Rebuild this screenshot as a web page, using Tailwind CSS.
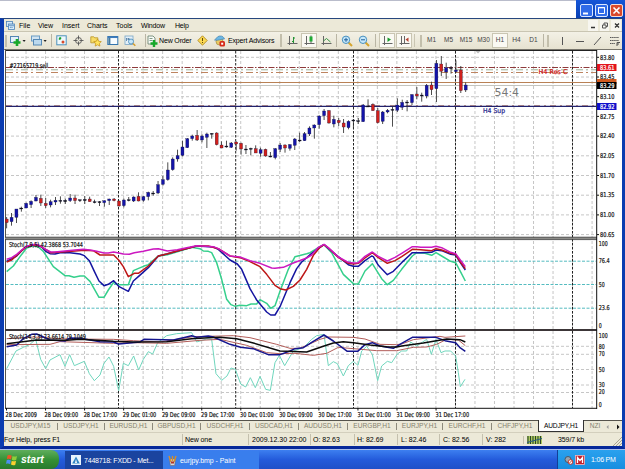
<!DOCTYPE html>
<html lang="en">
  <head>
    <meta charset="UTF-8" />
    <meta name="viewport" content="width=device-width, initial-scale=1.0" />
    <title>AUDJPY,H1</title>
    <script src="https://cdn.jsdelivr.net/npm/@tailwindcss/browser@4"></script>
  </head>
  <body class="w-[625px] h-[469px] overflow-hidden bg-[#ece9d8] text-[7px] leading-none text-black whitespace-nowrap font-['Liberation_Sans',Arial,sans-serif]">
    <div class="flex flex-col h-[449px]">
      <!-- Title bar -->
      <div class="flex h-[18px] shrink-0 justify-between bg-white border-t border-[#b9bccb]">
        <div></div>
        <div class="flex w-[49px] gap-[2px] pl-[4px] pt-[4px] -mt-px bg-linear-to-b from-[#1656d8] to-[#0840b4]">
          <svg class="w-[13px] h-[13px]" viewBox="0 0 13 13"><rect x=".5" y=".5" width="12" height="12" rx="1.5" fill="#2f6be8" stroke="#dce8ff"/><path d="M3 9.500h5" stroke="#fff" stroke-width="2"/></svg>
          <svg class="w-[13px] h-[13px]" viewBox="0 0 13 13"><rect x=".5" y=".5" width="12" height="12" rx="1.500" fill="#2f6be8" stroke="#dce8ff"/><path d="M3.500 3.500h6v6h-6zM3 3.800h7" fill="none" stroke="#fff"/></svg>
          <svg class="w-[13px] h-[13px]" viewBox="0 0 13 13"><rect x=".5" y=".5" width="12" height="12" rx="1.500" fill="#d9492b" stroke="#f6dcd4"/><path d="M3.500 3.500l6 6M9.500 3.500l-6 6" stroke="#fff" stroke-width="1.600"/></svg>
        </div>
      </div>

      <div class="flex-1 flex flex-col min-h-0 border-l-[4px] border-r-[3px] border-b-[3px] border-t border-[#0b3cb0] border-t-[#27477e] border-b-[#06289a]">
        <!-- Menu -->
        <div class="flex items-center h-[12px] shrink-0 pl-[2px]">
          <svg class="w-[9px] h-[9px] mr-[4px]" viewBox="0 0 9 9" fill="#d8ecfa" stroke="#4a82b8" stroke-width=".8"><rect x=".5" y=".5" width="6" height="5"/><rect x="2.500" y="3" width="6" height="5.500"/><path d="M3 4.300h5M4 7l1-1.300 1 1 1-1.200"/></svg>
          <span class="w-[19px]">File</span>
          <span class="w-[24px]">View</span>
          <span class="w-[25px]">Insert</span>
          <span class="w-[29px]">Charts</span>
          <span class="w-[25px]">Tools</span>
          <span class="w-[34px] tracking-[-0.15px]">Window</span>
          <span class="tracking-[-0.2px]">Help</span>
          <svg class="w-[36px] h-[11px] ml-auto" viewBox="0 0 36 11"><path d="M2 0h10v11H2zM14 0h9v11h-9zM25 0h10v11H25z" fill="#f7f6f0"/><path d="M5 7.500h4M29 3.500l4 4M33 3.500l-4 4" stroke="#333" stroke-width="1.300"/><path d="M16.500 5h3.500v3h-3.500zM18 5V3h3.500v3.500H20" fill="none" stroke="#555"/></svg>
        </div>

        <!-- Toolbar -->
        <div class="flex items-center h-[18px] shrink-0 border-t border-[#c9c5b2] bg-linear-to-b from-[#f3f1e6] to-[#e6e2d0] [&>svg]:shrink-0 [&>span]:shrink-0">
          <span class="w-[2px] h-[12px] ml-[1px] bg-[#c3bfac]"></span>
          <svg class="w-[18px] h-[12px] ml-[2px]" viewBox="0 0 18 12"><rect x="1.500" y="1.500" width="8" height="6" fill="#e4f1fa" stroke="#5486b4"/><path d="M8 4v7M4.500 7.500h7" stroke="#18a829" stroke-width="2.600"/><path d="M13.500 5h3.200l-1.600 2z" fill="#222"/></svg>
          <svg class="w-[18px] h-[12px] ml-[3px]" viewBox="0 0 18 12"><rect x="1.500" y="1" width="8" height="5" fill="#d1e4f2" stroke="#6a9bc4"/><rect x="3.500" y="4.500" width="8" height="5.500" fill="#bcd9ee" stroke="#5689b5"/><path d="M13.500 5h3.200l-1.600 2z" fill="#222"/></svg>
          <span class="w-px h-[13px] ml-[3px] bg-[#b9b5a4]"></span>
          <svg class="w-[11px] h-[11px] ml-[4px]" viewBox="0 0 11 11"><rect x=".8" y=".8" width="9.400" height="9" fill="#eef8fc" stroke="#4b91bd"/><path d="M3 4.500l2-2M3 3l2 1" stroke="#18a028" stroke-width="1.600"/><circle cx="7" cy="7" r="1.500" fill="#d84a2a"/></svg>
          <svg class="w-[11px] h-[11px] ml-[6px]" viewBox="0 0 11 11" fill="none" stroke="#555" stroke-width=".9"><circle cx="5.500" cy="5.500" r="3"/><path d="M5.500 .5v4M5.500 6.500v4M.5 5.500h4M6.500 5.500h4"/></svg>
          <svg class="w-[12px] h-[12px] ml-[6px]" viewBox="0 0 12 12"><path d="M.8 1.800h3l1 1h3v5h-7z" fill="#f7dc67" stroke="#b89326" stroke-width=".8"/><path d="M7.500 4l1.200 2.300 2.600.3-1.900 1.800.5 2.700-2.400-1.300-2.300 1.300.4-2.700L3.800 6.600l2.500-.3z" fill="#ffe45d" stroke="#c08c14" stroke-width=".7"/></svg>
          <svg class="w-[12px] h-[11px] ml-[5px]" viewBox="0 0 12 11"><rect x=".8" y="1.500" width="10" height="8" fill="#f8fcff" stroke="#3475ae"/><path d="M1 2.300h10" stroke="#3f7cbd" stroke-width="1.500"/><path d="M2.400 3v6" stroke="#477a9d" stroke-width="2"/></svg>
          <svg class="w-[12px] h-[12px] ml-[5px]" viewBox="0 0 12 12"><rect x="1" y="1" width="8" height="8.500" fill="#e5f0f8" stroke="#79a5c6" stroke-width=".8"/><path d="M2.500 6V3l2 2V3l2 2" fill="none" stroke="#4b78a0" stroke-width=".8"/><circle cx="7" cy="6.500" r="2.500" fill="#c6e6fa" stroke="#4588b7" stroke-width=".8"/><path d="M9 8.500l2.300 2.300" stroke="#d49d2b" stroke-width="1.500"/></svg>
          <span class="w-px h-[13px] ml-[9px] bg-[#b9b5a4]"></span>
          <svg class="w-[11px] h-[12px] ml-[1px]" viewBox="0 0 11 12"><path d="M1 1h5l2 2v6H1z" fill="#f8fbf7" stroke="#5f7c68" stroke-width=".8"/><path d="M2.500 3.500h3M2.500 5.500h3" stroke="#4a7258" stroke-width=".7"/><path d="M7 5v7M3.500 8.500h7" stroke="#18a829" stroke-width="2.400"/></svg>
          <span class="w-[36px] ml-px tracking-[-0.15px]">New Order</span>
          <svg class="w-[11px] h-[11px] ml-[2px]" viewBox="0 0 11 11"><path d="M5.500 .8l4.700 4.700-4.700 4.700L.8 5.500z" fill="#fbd952" stroke="#b08a21" stroke-width=".9"/><path d="M5.500 3v3M5.500 7v1" stroke="#654b09"/></svg>
          <svg class="w-[12px] h-[12px] ml-[6px]" viewBox="0 0 12 12"><circle cx="5.500" cy="6.500" r="3.500" fill="#eacb63" stroke="#947d33" stroke-width=".6"/><path d="M.5 5c2-1 2-3.500 5-4s4.500 1.500 5 3c-4 0-6 2-10 1z" fill="#6cb8e5" stroke="#3a7aa8" stroke-width=".6"/><rect x="5.500" y="6" width="5.500" height="5.500" rx="1.500" fill="#d52b18"/><rect x="7.200" y="7.700" width="2" height="2" fill="#fff"/></svg>
          <span class="w-[52px] ml-[2px] tracking-[-0.15px]">Expert Advisors</span>
          <span class="w-[2px] h-[13px] bg-[#c3bfac]"></span>
          <svg class="w-[11px] h-[11px] ml-[5px]" viewBox="0 0 11 11" fill="none"><path d="M2.500 1v9M.5 8.500h10" stroke="#666"/><path d="M6.500 2v6M5 6.500h1.500M6.500 3H8" stroke="#239234"/></svg>
          <span class="flex items-center justify-center w-[16px] h-[15px] ml-[3px] bg-[#faf9f3] border border-[#c9c5b2]"><svg class="w-[11px] h-[11px]" viewBox="0 0 11 11"><path d="M2.500 1v9M.5 8.500h10M7 .5v8" stroke="#666"/><rect x="5.500" y="1.500" width="3" height="5" fill="#1fab34"/></svg></span>
          <svg class="w-[11px] h-[11px] ml-[4px]" viewBox="0 0 11 11" fill="none"><path d="M2.500 1v9M.5 8.500h10" stroke="#666"/><path d="M2.500 6l3-2.500L9.500 7" stroke="#3a9646"/></svg>
          <span class="w-px h-[13px] ml-[4px] bg-[#b9b5a4]"></span>
          <svg class="w-[12px] h-[12px] ml-[4px]" viewBox="0 0 12 12"><path d="M7.500 7.500l3.500 3.500" stroke="#d5a52d" stroke-width="2"/><circle cx="5" cy="4.800" r="3.700" fill="#c6e8fb" stroke="#4990be"/><path d="M3 4.800h4M5 2.800v4" stroke="#1f609a"/></svg>
          <svg class="w-[12px] h-[12px] ml-[5px]" viewBox="0 0 12 12"><path d="M7.500 7.500l3.500 3.500" stroke="#d5a52d" stroke-width="2"/><circle cx="5" cy="4.800" r="3.700" fill="#c6e8fb" stroke="#4990be"/><path d="M3 4.800h4" stroke="#1f609a"/></svg>
          <span class="w-px h-[13px] ml-[5px] bg-[#b9b5a4]"></span>
          <span class="flex items-center justify-center w-[16px] h-[15px] ml-[3px] bg-[#faf9f3] border border-[#c9c5b2]"><svg class="w-[11px] h-[11px]" viewBox="0 0 11 11"><path d="M2.500 1v9M.5 8.500h10" stroke="#666"/><path d="M5.500 2.500l3.500 2-3.500 2.500z" fill="#169b2a"/></svg></span>
          <span class="flex items-center justify-center w-[16px] h-[15px] ml-px bg-[#faf9f3] border border-[#c9c5b2]"><svg class="w-[11px] h-[11px]" viewBox="0 0 11 11"><path d="M2.500 1v9M.5 8.500h10M5.500 1v7" stroke="#666"/><path d="M9.500 2.500l-3 2 3 2.500z" fill="#b74332"/></svg></span>
          <span class="w-px h-[13px] ml-[2px] bg-[#c9c5b2]"></span>
          <span class="w-[2px] h-[12px] ml-[5px] bg-[#c3bfac]"></span>
          <div class="flex items-center shrink-0 ml-[1px] text-[6.500px] text-[#444] text-center">
            <span class="w-[17px]">M1</span>
            <span class="w-[17px]">M5</span>
            <span class="w-[18px]">M15</span>
            <span class="w-[17px]">M30</span>
            <span class="w-[16px] h-[15px] pt-[3px] bg-[#faf9f3] border border-[#c9c5b2]">H1</span>
            <span class="w-[17px]">H4</span>
            <span class="w-[17px]">D1</span>
          </div>
          <span class="w-px h-[13px] ml-[1px] bg-[#b9b5a4]"></span>
          <span class="w-[2px] h-[12px] ml-[3px] bg-[#c3bfac]"></span>
          <svg class="w-[72px] h-[12px] ml-[2px]" viewBox="0 0 72 12" fill="none" stroke="#555"><path d="M11.500 2v8M25 6.500h8M43 10l7-8"/><path d="M59 2.500h9M59 5.500h9M59 8.500h5" stroke-dasharray="1.500 .6"/><path d="M66 11V7.500h3M66 9h2"/></svg>
        </div>

        <!-- Charts -->
        <svg id="chart" class="block w-full h-[371px] shrink-0 bg-white" viewBox="4 49 618 371">
          <path d="M4 49.500h618" stroke="#77756c"/>
          <path d="M5.500 49v359" stroke="#55534c"/>
          <path d="M6 50.500h591" stroke="#222"/>
          <g id="grid" stroke="#c6c6c6" stroke-dasharray="3 2"></g>
          <path d="M6 261.200h590M6 284.500h590M6 308.200h590" stroke="#55bcc0" stroke-dasharray="3 1.500"/>
          <g id="days" stroke="#222" stroke-dasharray="2.500 1.500"></g>

          <path d="M6 67.500h590" stroke="#8e3a3a" stroke-dasharray="6 1.500 1.500 1.500"/>
          <path d="M6 69.800h590" stroke="#9bb094" stroke-dasharray="7 3 2 3"/>
          <path d="M6 72.500h590" stroke="#bd8460" stroke-dasharray="7 3 2 3"/>
          <path d="M6 82.500h590" stroke="#b98155" stroke-width="1.200"/>
          <path d="M6 85.500h590" stroke="#c4c4be"/>
          <path d="M6 105.500h590" stroke="#b98172" stroke-dasharray="6 4 2 4" stroke-width=".8"/>
          <path d="M6 106.400h590" stroke="#22226c" stroke-width="1.100"/>

          <g id="candles" transform="translate(0 48) scale(.33333)"></g>
          <g transform="translate(0 236) scale(.33333)" fill="none" stroke-width="4.500" stroke-linejoin="round">
            <polyline stroke="#35cf8c" points="20,107 40,90 60,62 80,36 100,29 115,33 130,46 160,92 195,119 207,119 222,124 240,120 253,120 270,136 297,184 312,184 325,162 341,139 356,146 385,146 400,104 430,91 445,86 475,60 502,56 532,47 575,34 600,38 610,45 625,46 635,50 650,80 665,130 680,190 693,206 706,211 720,208 740,209 753,204 770,204 780,191 800,202 812,217 825,209 840,166 865,100 885,62 920,53 930,50 960,32 972,26 995,50 1030,115 1060,143 1075,144 1095,105 1117,83 1145,128 1162,146 1180,133 1205,100 1237,60 1250,50 1275,52 1295,58 1308,50 1325,60 1352,76 1367,80 1381,106 1396,135"/>
            <polyline stroke="#1515a0" points="20,76 50,60 65,44 80,32 95,27 110,27 125,33 137,46 150,53 165,54 180,50 210,50 240,54 253,59 268,74 283,106 297,135 312,149 325,145 341,134 356,151 385,166 400,135 415,122 445,95 475,60 500,54 532,45 590,30 640,33 655,40 690,72 712,84 725,100 750,158 770,192 785,210 800,228 812,237 825,237 840,212 870,140 890,98 905,78 935,52 960,34 972,26 1000,50 1045,86 1060,91 1075,91 1095,74 1115,60 1120,62 1135,88 1162,116 1180,106 1205,80 1237,50 1262,50 1295,49 1308,42 1325,44 1352,55 1367,57 1381,80 1396,102"/>
            <polyline stroke="#bd1717" points="20,78 35,72 50,58 65,44 80,32 95,27 110,27 122,31 137,40 152,50 195,47 225,45 253,43 280,44 300,57 341,57 356,72 370,92 385,122 403,112 415,112 445,90 475,60 500,54 532,45 590,30 625,30 655,38 690,60 720,65 750,77 780,92 800,115 825,148 840,158 857,162 880,151 900,132 920,100 940,58 960,34 972,26 985,36 1015,64 1045,82 1060,84 1075,82 1095,66 1117,50 1135,65 1162,82 1185,74 1205,62 1237,40 1262,41 1295,44 1308,38 1325,42 1352,52 1367,55 1381,78 1396,98"/>
            <polyline stroke="#cc18c0" points="20,70 35,65 50,55 65,42 78,32 95,26 110,25 122,30 137,40 152,48 165,48 195,45 225,42 250,40 270,42 290,46 312,51 325,51 341,48 356,51 370,54 388,55 403,50 430,46 460,39 475,38 490,42 502,45 532,41 560,35 590,29 604,30 640,32 655,38 690,60 720,63 750,74 780,82 815,96 825,97 850,94 880,81 920,66 935,57 955,34 972,25 985,35 1015,63 1045,79 1060,81 1075,80 1095,61 1117,48 1135,61 1162,75 1185,64 1205,52 1237,32 1250,32 1262,34 1295,34 1308,31 1325,35 1352,49 1367,53 1381,72 1396,92"/>

            <polyline stroke="#6fd6bd" stroke-width="3" points="20,398 48,345 70,334 90,325 107,310 122,370 137,398 150,372 180,356 195,391 209,356 223,389 253,376 268,413 283,434 300,417 312,382 327,363 341,391 356,464 370,382 385,389 401,360 416,402 430,370 445,347 458,354 473,320 500,299 530,293 575,290 590,318 620,309 635,310 648,413 665,433 681,420 693,396 706,400 722,444 737,453 751,425 766,455 780,421 797,460 811,463 825,380 838,358 854,389 880,345 910,335 935,310 950,299 972,295 985,389 1000,377 1012,383 1030,420 1045,389 1060,376 1074,388 1085,345 1100,331 1117,355 1133,434 1145,390 1162,376 1175,380 1192,354 1205,345 1220,345 1232,318 1250,330 1280,310 1294,355 1308,310 1323,350 1335,345 1352,345 1367,360 1375,410 1381,452 1395,430"/>
            <polyline stroke="#b25c58" stroke-width="3" points="20,308 100,303 200,309 340,310 400,314 480,318 580,302 625,301 700,299 750,305 830,325 870,337 900,337 960,310 985,303 1060,304 1095,309 1140,325 1190,326 1205,324 1240,311 1320,301 1335,304 1396,300"/>
            <polyline stroke="#b25c58" stroke-width="3" points="20,326 150,325 180,317 340,322 400,320 500,322 600,313 660,310 740,328 800,350 840,353 885,352 940,358 980,352 1015,334 1060,338 1130,344 1190,344 1240,334 1280,333 1310,325 1340,310 1375,312 1396,329"/>
            <polyline stroke="#15158e" points="20,332 50,327 70,308 95,295 110,294 137,306 150,312 195,315 210,306 240,307 270,312 300,317 340,318 356,324 420,318 432,310 520,312 550,305 575,299 590,304 625,300 640,303 690,325 722,334 760,338 805,356 840,356 870,345 885,338 910,335 940,316 972,297 1000,315 1042,346 1073,346 1095,326 1117,320 1140,330 1180,337 1205,322 1237,304 1308,304 1335,314 1367,320 1381,336 1396,346"/>
            <polyline stroke="#0c0c0c" points="20,323 110,312 200,313 240,310 340,316 400,318 500,317 575,308 625,305 660,304 710,308 760,321 840,345 920,348 970,331 1000,321 1030,317 1060,320 1110,327 1160,332 1190,333 1205,330 1270,321 1340,309 1380,311 1396,318"/>
          </g>

          <!-- Panel splitters and axes -->
          <path d="M5 238.300h592" stroke="#8c8c88" stroke-width="2"/>
          <path d="M5 237.200h592M5 239.600h592" stroke="#333" stroke-width=".8"/>
          <path d="M5 330h592" stroke="#3c3638" stroke-width="1.800"/>
          <path d="M5 408.300h592M596.700 50v359" stroke="#111" fill="none"/>
          <path d="M475.500 51h5l-2.500 2.500z" fill="#bbb"/>
          <g id="ticks" stroke="#111"></g>
          <rect x="597" y="64" width="19.500" height="7" fill="#e3141c"/>
          <rect x="597" y="79" width="19.500" height="5" fill="#d35a1f"/>
          <rect x="597" y="82" width="19.500" height="7" fill="#000"/>
          <rect x="597" y="103" width="19.500" height="7" fill="#1010cc"/>
          <g id="labels" class="font-['DejaVu_Sans_Condensed','DejaVu_Sans',sans-serif]" font-size="6.700" stroke-width=".2"></g>
        </svg>

        <!-- Chart tabs -->
        <div class="flex items-center h-[12px] shrink-0 border-t border-[#55534c] text-[#85826f] text-center text-[6.600px] [&>span]:shrink-0">
          <span class="w-[53px]">USDJPY,M15</span>
          <span class="w-[47px] border-l border-[#8d8a7c]">USDJPY,H1</span>
          <span class="w-[48px] border-l border-[#8d8a7c]">EURUSD,H1</span>
          <span class="w-[48px] border-l border-[#8d8a7c]">GBPUSD,H1</span>
          <span class="w-[49px] border-l border-[#8d8a7c]">USDCHF,H1</span>
          <span class="w-[49px] border-l border-[#8d8a7c]">USDCAD,H1</span>
          <span class="w-[49px] border-l border-[#8d8a7c]">AUDUSD,H1</span>
          <span class="w-[49px] border-l border-[#8d8a7c]">EURGBP,H1</span>
          <span class="w-[46px] border-l border-[#8d8a7c]">EURJPY,H1</span>
          <span class="w-[49px] border-l border-[#8d8a7c]">EURCHF,H1</span>
          <span class="w-[47px] border-l border-[#8d8a7c]">CHFJPY,H1</span>
          <span class="w-[46px] h-[12px] pt-[3px] -mt-px border border-t-0 border-[#333] bg-white text-black tracking-[-0.15px]">AUDJPY,H1</span>
          <span class="w-[22px]">NZI</span>
          <svg class="w-[16px] h-[8px]" viewBox="0 0 16 8"><path d="M2.500 2v4l-2-2z" fill="#999"/><path d="M11 1.500v5l2.500-2.500z" fill="#111"/></svg>
        </div>

        <!-- Status bar -->
        <div class="flex items-center flex-1 border-t border-[#d3cfbd] [&>span]:shrink-0">
          <span class="w-[178px] tracking-[-0.1px]">For Help, press F1</span>
          <span class="w-[66px] pl-[2px] py-[2px] border-l border-[#c4c0ae] tracking-[-0.1px]">New one</span>
          <span class="w-[62px] pl-[3px] py-[2px] border-l border-[#c4c0ae]">2009.12.30 22:00</span>
          <span class="w-[44px] pl-[2px] py-[2px] border-l border-[#c4c0ae]">O: 82.63</span>
          <span class="w-[43px] pl-[2px] py-[2px] border-l border-[#c4c0ae]">H: 82.69</span>
          <span class="w-[42px] pl-[3px] py-[2px] border-l border-[#c4c0ae]">L: 82.46</span>
          <span class="w-[43px] pl-[3px] py-[2px] border-l border-[#c4c0ae]">C: 82.56</span>
          <span class="w-[41px] pl-[3px] py-[2px] border-l border-[#c4c0ae]">V: 282</span>
          <span class="w-[31px] pl-[3px] border-l border-[#c4c0ae]"><svg class="w-[15px] h-[8px]" viewBox="0 0 15 8"><rect width="15" height="8" fill="#b4cf62"/><path d="M1 0v8M3.500 0v8M6 0v8M8.500 0v8M11 0v8M13.500 0v8" stroke="#29452a" stroke-width="1.100"/><path d="M0 6.500l15-4" stroke="#2b5f80"/></svg></span>
          <span class="pl-[4px] tracking-[-0.1px]">359/7 kb</span>
          <svg class="w-[10px] h-[10px] ml-auto mt-[3px]" viewBox="0 0 10 10"><path d="M1 10l9-9M4 10l6-6M7 10l3-3" stroke="#a9a592"/></svg>
        </div>
      </div>
    </div>

    <!-- Taskbar -->
    <div class="flex h-[20px] items-stretch border-t border-[#a9bdea] bg-linear-to-b from-[#3d7ff0] via-[#245bdb] to-[#1f50c8] text-white">
      <div class="flex items-center w-[59px] shrink-0 pl-[6px] gap-[3px] rounded-r-lg bg-linear-to-b from-[#5fae5c] via-[#359136] to-[#287a2c] text-[10.500px] font-bold italic">
        <svg class="w-[12px] h-[12px]" viewBox="0 0 12 12"><path d="M1.500 1.500c1.500-.8 3-.6 4.200.2L5 5.500c-1.400-.8-2.700-.8-4.200-.2z" fill="#ee5327"/><path d="M6.500 2c1.500.8 3 .8 4.500 0l-.8 4c-1.500.7-3 .6-4.400-.2z" fill="#8fce3a"/><path d="M.7 6.200c1.400-.7 2.800-.6 4.200.2l-.7 3.800c-1.500-.8-2.700-.8-4.200-.2z" fill="#4c8ff0"/><path d="M5.700 6.700c1.400.8 2.900.9 4.400.1l-.8 3.900c-1.400.8-2.900.6-4.300-.2z" fill="#fbd030"/></svg>
        <span class="pb-px">start</span>
      </div>
      <div class="flex items-center w-[98px] ml-[6px] pl-[6px] gap-[3px] mt-px bg-[#1a449f]">
        <svg class="w-[10px] h-[10px]" viewBox="0 0 10 10"><rect width="10" height="10" fill="#e9f4fc"/><path d="M5 1.500L8.800 8.500H1.200z" fill="#3085c4"/><path d="M5 4l1 4H4z" fill="#fff"/></svg>
        <span class="tracking-[-0.2px]">7448718: FXDD - Met...</span>
      </div>
      <div class="flex items-center w-[96px] pl-[5px] gap-[3px] mt-px bg-[#397eed]">
        <svg class="w-[9px] h-[11px]" viewBox="0 0 9 11"><path d="M1.500 4h6l-.8 6.500H2.300z" fill="#d6d8dc" stroke="#6c6570" stroke-width=".6"/><path d="M3 7L1 1M4.500 6V1M6 7l2-6" stroke="#d58d2c" stroke-width="1.400"/><path d="M3 6.500h3v2H3z" fill="#b53425"/></svg>
        <span class="tracking-[-0.05px]">eurjpy.bmp - Paint</span>
      </div>
      <div class="flex items-center w-[68px] ml-auto pl-[6px] border-l border-[#123f97] bg-linear-to-b from-[#2aa1ee] to-[#168ee0]">
        <svg class="w-[21px] h-[10px] mr-[6px]" viewBox="0 0 21 10"><circle cx="4" cy="4.500" r="3" fill="#9aa3ac" stroke="#4c5866"/><circle cx="6.500" cy="7" r="2.300" fill="#fff" stroke="#c8382b"/><path d="M5 8.500l3-3" stroke="#c8382b"/><rect x="11.500" y=".5" width="9" height="9" fill="#c2202d" stroke="#f0b9bd" stroke-width=".8"/><path d="M13.500 8V2.500L16 5.500l2.500-3V8" fill="none" stroke="#fff" stroke-width="1.300"/></svg>
        <span class="tracking-[-0.2px]">1:06 PM</span>
      </div>
    </div>

    <script>
      const NS = "http://www.w3.org/2000/svg";

      function add(parent, tag, attrs, text) {
        const el = document.createElementNS(NS, tag);
        for (const k in attrs) el.setAttribute(k, attrs[k]);
        if (text) el.textContent = text;
        document.getElementById(parent).appendChild(el);
      }
      const line = (parent, x1, y1, x2, y2) => add(parent, "line", { x1, y1, x2, y2 });
      const label = (x, y, w, text, fill = "#111") =>
        add("labels", "text", { x, y, fill, stroke: fill, textLength: w, lengthAdjust: "spacingAndGlyphs" }, text);

      // grid
      for (let k = 0; k < 30; k++) {
        const x = 26 + 19.52 * k;
        line("grid", x, 51, x, 408);
      }
      for (let k = 0; k < 10; k++) {
        const y = 57.3 + 19.7 * k;
        line("grid", 6, y, 596, y);
        line("ticks", 597, y, 599, y);
        label(600, y + 2.2, 14.5, (83.8 - 0.35 * k).toFixed(2));
      }
      [346.3, 354.3, 369.5, 385, 392.5].forEach((y) => line("grid", 6, y, 596, y));
      [118.5, 235.7, 353.5, 455.5, 572.5].forEach((x) => line("days", x, 51, x, 408));

      label(600, 69.8, 14.5, "83.61", "#fff");
      label(600, 87.8, 14.5, "83.29", "#fff");
      label(600, 108.8, 14.5, "82.92", "#fff");
      [[246, "100", 9], [263.2, "76.4", 11], [286.5, "50", 6], [310.2, "23.6", 11], [328, "0", 3],
       [338, "100", 9], [348.5, "80", 6], [356.3, "70", 6], [371.6, "50", 6], [387, "30", 6], [394.3, "20", 6], [407, "0", 3]]
        .forEach(([y, t, w]) => label(598.7, y, w, t));

      ["28 Dec 2009", "28 Dec 09:00", "28 Dec 17:00", "29 Dec 01:00", "29 Dec 09:00", "29 Dec 17:00", "30 Dec 01:00",
       "30 Dec 09:00", "30 Dec 17:00", "31 Dec 01:00", "31 Dec 09:00", "31 Dec 17:00"].forEach((t, i) => {
        line("ticks", 6.5 + 39.05 * i, 408, 6.5 + 39.05 * i, 410.5);
        label(5.5 + 39.1 * i, 416.5, i ? 33.5 : 31.5, t);
      });

      label(9.5, 68.3, 38.5, "#27165719 sell");
      label(9, 247.3, 74, "Stoch(7,9,5) 42.3868 53.7044");
      label(9, 339, 77, "Stoch(14,3,3) 73.6614 79.1049");
      label(538.5, 73.5, 29, "H4 Res C", "#cc1111");
      label(483, 112.5, 22, "H4 Sup", "#22228c");
      add("labels", "text", { x: 494.5, y: 96, fill: "#777", "font-size": 10.5, textLength: 24.5, lengthAdjust: "spacingAndGlyphs" }, "54:4");

      // high, body top, body bottom, low, kind (b = up, r = down, k = doji), in thirds of a pixel
      const candles = `507,513,524,541,r 495,508,521,533,b 483,483,508,525,b 476,480,482,491,k 464,466,480,480,b 457,460,470,480,b
        441,448,459,460,b 440,451,465,474,r 450,466,473,480,r 455,461,471,478,b 447,457,462,471,b 445,457,459,467,k 452,457,461,468,k
        438,450,458,462,b 440,450,458,468,r 455,455,458,462,k 444,454,458,468,k 446,453,461,461,r 455,461,464,466,k 459,461,462,474,k
        457,458,464,476,b 452,453,458,471,b 450,453,458,460,r 458,459,474,476,r 452,456,473,478,b 447,455,458,460,k 445,447,459,462,b
        433,445,459,460,r 444,446,457,461,b 431,433,446,457,b 429,435,437,443,k 399,410,435,438,b 384,395,409,413,b 343,366,395,398,b
        328,333,365,368,b 305,323,333,341,b 278,297,322,325,b 270,272,299,300,b 260,264,272,278,b 246,262,276,279,r 259,264,276,283,b
        254,258,268,300,b 255,256,258,272,k 253,255,290,292,r 280,291,300,300,r 278,294,296,299,k 282,285,298,300,b 280,282,288,308,r
        284,286,303,320,r 291,303,305,318,k 299,301,303,322,k 292,302,315,315,r 299,305,316,326,b 302,304,324,326,r 312,324,325,328,k
        300,302,329,334,b 285,291,304,312,b 289,291,300,314,r 288,290,301,308,b 270,273,292,306,b 254,276,278,282,k 252,257,278,279,b
        235,240,258,264,b 229,231,240,272,b 202,204,230,242,b 183,189,203,216,b 186,188,225,227,r 203,214,228,238,b 210,217,224,234,r
        213,225,237,255,r 217,220,239,244,b 214,216,219,242,k 210,218,220,228,k 168,171,221,222,b 154,174,176,176,k 166,169,188,188,r
        180,188,224,226,r 189,192,220,228,b 183,187,192,196,b 175,184,187,236,k 151,171,187,192,b 155,163,178,186,b 156,162,165,190,k
        138,140,164,171,b 117,138,144,154,r 134,141,143,161,k 108,112,144,151,b 101,111,125,141,r 36,46,122,162,b 24,48,70,84,r
        44,59,72,93,b 54,59,61,77,k 37,66,71,74,b 54,66,128,135,r 103,111,126,132,b`;
      const fills = { b: "#1414a8", r: "#d0201c", k: "#111" };
      candles.split(/\s+/).forEach((c, i) => {
        const [high, top, bottom, low, kind] = c.split(",");
        const x = 20 + 14.65 * i;
        add("candles", "rect", { x: x - 1.3, y: high, width: 2.6, height: low - high, fill: "#333" });
        add("candles", "rect", { x: x - 4.5, y: top, width: 9, height: Math.max(bottom - top, 3), fill: fills[kind], stroke: "#15153a", "stroke-width": 0.9 });
      });
    </script>
  </body>
</html>
